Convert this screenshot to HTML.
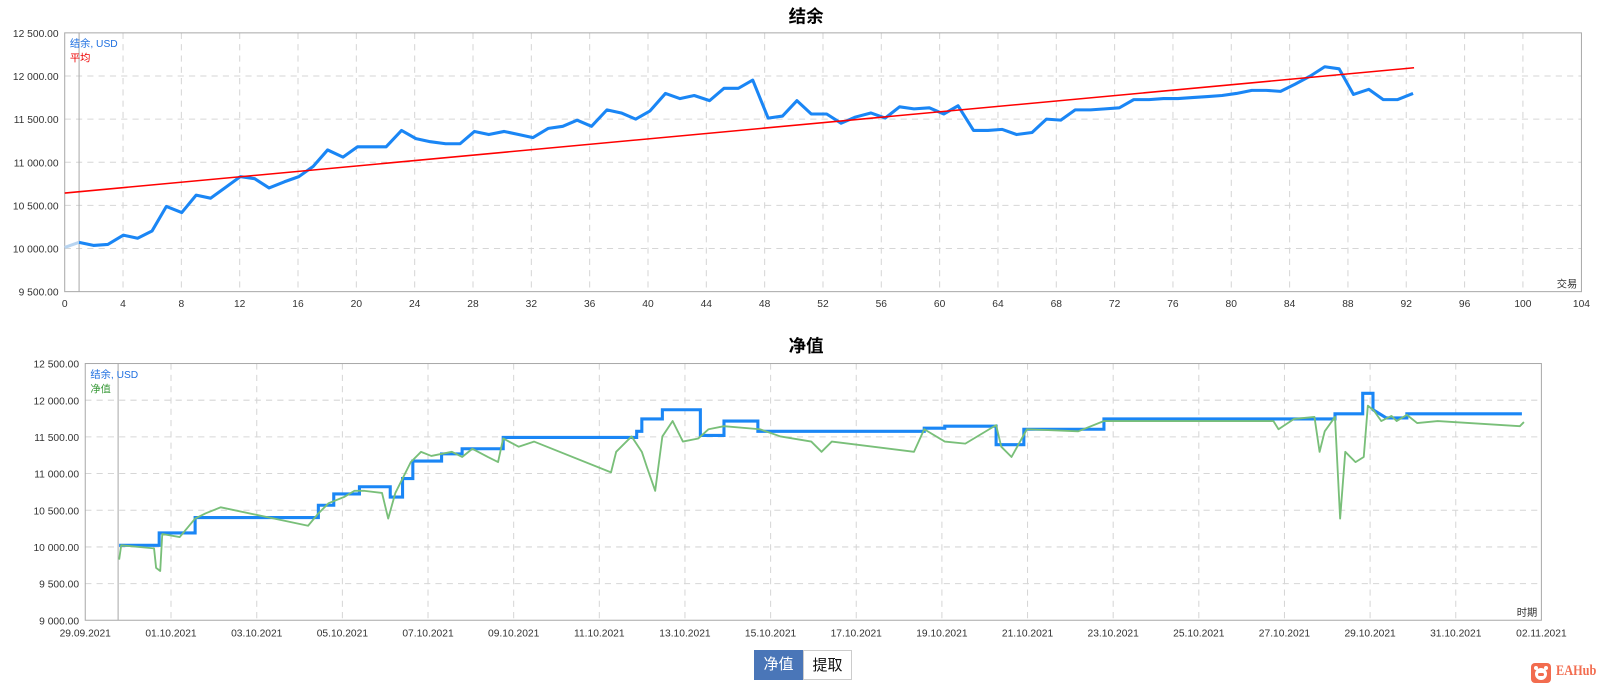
<!DOCTYPE html>
<html><head><meta charset="utf-8"><style>
html,body{margin:0;padding:0;background:#fff;width:1602px;height:687px;overflow:hidden;position:relative;font-family:"Liberation Sans","Noto Sans CJK SC",sans-serif}
svg{position:absolute;left:0;top:0}
.btn{position:absolute;top:650px;height:30px;line-height:30px;width:49px;text-align:center;font-size:15px;box-sizing:border-box}
</style></head><body>
<svg width="1602" height="687" viewBox="0 0 1560 669" font-family="Liberation Sans, Noto Sans CJK SC, sans-serif">
<text x="785" y="22" font-size="17" font-weight="bold" text-anchor="middle" fill="#000">结余</text>
<g stroke="#d6d6d6" stroke-dasharray="6,5" stroke-width="1">
<line x1="63" y1="74" x2="1540" y2="74"/><line x1="63" y1="116" x2="1540" y2="116"/><line x1="63" y1="158" x2="1540" y2="158"/><line x1="63" y1="200" x2="1540" y2="200"/><line x1="63" y1="242" x2="1540" y2="242"/>
<line x1="119.8" y1="32" x2="119.8" y2="284"/><line x1="176.6" y1="32" x2="176.6" y2="284"/><line x1="233.4" y1="32" x2="233.4" y2="284"/><line x1="290.2" y1="32" x2="290.2" y2="284"/><line x1="347" y1="32" x2="347" y2="284"/><line x1="403.8" y1="32" x2="403.8" y2="284"/><line x1="460.6" y1="32" x2="460.6" y2="284"/><line x1="517.4" y1="32" x2="517.4" y2="284"/><line x1="574.2" y1="32" x2="574.2" y2="284"/><line x1="631" y1="32" x2="631" y2="284"/><line x1="687.8" y1="32" x2="687.8" y2="284"/><line x1="744.6" y1="32" x2="744.6" y2="284"/><line x1="801.4" y1="32" x2="801.4" y2="284"/><line x1="858.2" y1="32" x2="858.2" y2="284"/><line x1="915" y1="32" x2="915" y2="284"/><line x1="971.8" y1="32" x2="971.8" y2="284"/><line x1="1028.6" y1="32" x2="1028.6" y2="284"/><line x1="1085.4" y1="32" x2="1085.4" y2="284"/><line x1="1142.2" y1="32" x2="1142.2" y2="284"/><line x1="1199" y1="32" x2="1199" y2="284"/><line x1="1255.8" y1="32" x2="1255.8" y2="284"/><line x1="1312.6" y1="32" x2="1312.6" y2="284"/><line x1="1369.4" y1="32" x2="1369.4" y2="284"/><line x1="1426.2" y1="32" x2="1426.2" y2="284"/><line x1="1483" y1="32" x2="1483" y2="284"/>
</g>
<rect x="63" y="32" width="1477" height="252" fill="none" stroke="#aaa"/>
<line x1="77" y1="32" x2="77" y2="284" stroke="#aaa"/>
<g font-size="10" fill="#333" text-anchor="end">
<text x="57" y="36">12 500.00</text><text x="57" y="78">12 000.00</text><text x="57" y="120">11 500.00</text><text x="57" y="162">11 000.00</text><text x="57" y="204">10 500.00</text><text x="57" y="246">10 000.00</text><text x="57" y="288">9 500.00</text>
</g>
<g font-size="10" fill="#333" text-anchor="middle">
<text x="63" y="299">0</text><text x="119.8" y="299">4</text><text x="176.6" y="299">8</text><text x="233.4" y="299">12</text><text x="290.2" y="299">16</text><text x="347" y="299">20</text><text x="403.8" y="299">24</text><text x="460.6" y="299">28</text><text x="517.4" y="299">32</text><text x="574.2" y="299">36</text><text x="631" y="299">40</text><text x="687.8" y="299">44</text><text x="744.6" y="299">48</text><text x="801.4" y="299">52</text><text x="858.2" y="299">56</text><text x="915" y="299">60</text><text x="971.8" y="299">64</text><text x="1028.6" y="299">68</text><text x="1085.4" y="299">72</text><text x="1142.2" y="299">76</text><text x="1199" y="299">80</text><text x="1255.8" y="299">84</text><text x="1312.6" y="299">88</text><text x="1369.4" y="299">92</text><text x="1426.2" y="299">96</text><text x="1483" y="299">100</text><text x="1540" y="299">104</text>
</g>
<text x="1536" y="280" font-size="10" text-anchor="end" fill="#333">交易</text>
<text x="68" y="46" font-size="10" fill="#1e6fe0">结余, USD</text>
<text x="68" y="60" font-size="10" fill="#e00">平均</text>
<line x1="63" y1="241" x2="77" y2="236" stroke="#b8d4f0" stroke-width="3"/>
<polyline fill="none" stroke="#1a86f5" stroke-width="3" stroke-linejoin="round" points="77,236 91,239 105,238 120,229 134,232 148,225 162,201 177,207 191,190 205,193 219,183 234,172 248,174 262,183 277,177 291,172 305,162 319,146 334,153 348,143 362,143 376,143 391,127 405,135 419,138 434,140 448,140 462,128 476,131 491,128 505,131 519,134 534,125 548,123 562,117 576,123 591,107 605,110 619,116 633,108 648,91 662,96 676,93 691,98 705,86 719,86 733,78 748,115 762,113 776,98 790,111 805,111 819,120 833,114 848,110 862,115 876,104 890,106 905,105 919,111 933,103 948,127 962,127 976,126 990,131 1005,129 1019,116 1033,117 1047,107 1062,107 1076,106 1090,105 1104,97 1119,97 1133,96 1147,96 1161,95 1176,94 1190,93 1204,91 1219,88 1233,88 1247,89 1261,82 1276,74 1290,65 1304,67 1318,92 1333,87 1347,97 1361,97 1376,91"/>
<line x1="63" y1="188" x2="1377" y2="66" stroke="#f00" stroke-width="1.5"/>

<text x="785" y="343" font-size="17" font-weight="bold" text-anchor="middle" fill="#000">净值</text>
<g stroke="#d6d6d6" stroke-dasharray="6,5" stroke-width="1">
<line x1="83" y1="389.7" x2="1501" y2="389.7"/><line x1="83" y1="425.4" x2="1501" y2="425.4"/><line x1="83" y1="461.1" x2="1501" y2="461.1"/><line x1="83" y1="496.9" x2="1501" y2="496.9"/><line x1="83" y1="532.6" x2="1501" y2="532.6"/><line x1="83" y1="568.3" x2="1501" y2="568.3"/>
<line x1="166.5" y1="354" x2="166.5" y2="604"/><line x1="250" y1="354" x2="250" y2="604"/><line x1="333.4" y1="354" x2="333.4" y2="604"/><line x1="416.8" y1="354" x2="416.8" y2="604"/><line x1="500.2" y1="354" x2="500.2" y2="604"/><line x1="583.6" y1="354" x2="583.6" y2="604"/><line x1="667" y1="354" x2="667" y2="604"/><line x1="750.4" y1="354" x2="750.4" y2="604"/><line x1="833.8" y1="354" x2="833.8" y2="604"/><line x1="917.2" y1="354" x2="917.2" y2="604"/><line x1="1000.6" y1="354" x2="1000.6" y2="604"/><line x1="1084" y1="354" x2="1084" y2="604"/><line x1="1167.4" y1="354" x2="1167.4" y2="604"/><line x1="1250.8" y1="354" x2="1250.8" y2="604"/><line x1="1334.2" y1="354" x2="1334.2" y2="604"/><line x1="1417.6" y1="354" x2="1417.6" y2="604"/>
</g>
<rect x="83" y="354" width="1418" height="250" fill="none" stroke="#aaa"/>
<line x1="115" y1="354" x2="115" y2="604" stroke="#aaa"/>
<g font-size="10" fill="#333" text-anchor="end">
<text x="77" y="358">12 500.00</text><text x="77" y="393.7">12 000.00</text><text x="77" y="429.4">11 500.00</text><text x="77" y="465.1">11 000.00</text><text x="77" y="500.9">10 500.00</text><text x="77" y="536.6">10 000.00</text><text x="77" y="572.3">9 500.00</text><text x="77" y="608">9 000.00</text>
</g>
<g font-size="10" fill="#333" text-anchor="middle">
<text x="83" y="620">29.09.2021</text><text x="166.5" y="620">01.10.2021</text><text x="250" y="620">03.10.2021</text><text x="333.4" y="620">05.10.2021</text><text x="416.8" y="620">07.10.2021</text><text x="500.2" y="620">09.10.2021</text><text x="583.6" y="620">11.10.2021</text><text x="667" y="620">13.10.2021</text><text x="750.4" y="620">15.10.2021</text><text x="833.8" y="620">17.10.2021</text><text x="917.2" y="620">19.10.2021</text><text x="1000.6" y="620">21.10.2021</text><text x="1084" y="620">23.10.2021</text><text x="1167.4" y="620">25.10.2021</text><text x="1250.8" y="620">27.10.2021</text><text x="1334.2" y="620">29.10.2021</text><text x="1417.6" y="620">31.10.2021</text><text x="1501" y="620">02.11.2021</text>
</g>
<text x="1497" y="600" font-size="10" text-anchor="end" fill="#333">时期</text>
<text x="88" y="368" font-size="10" fill="#1e6fe0">结余, USD</text>
<text x="88" y="382" font-size="10" fill="#3a9a3a">净值</text>
<polyline fill="none" stroke="#1a86f5" stroke-width="3" points="116,531 155,531 155,519 190,519 190,504 310,504 310,492 325,492 325,481 350,481 350,474 380,474 380,484 392,484 392,466 402,466 402,449 430,449 430,442 450,442 450,437 490,437 490,426 620,426 620,420 625,420 625,408 645,408 645,399 682,399 682,424 705,424 705,410 738,410 738,420 900,420 900,417 920,417 920,415 970,415 970,433 997,433 997,418 1075,418 1075,408 1300,408 1300,403 1327,403 1327,383 1337,383 1337,399 1350,407 1370,407 1370,403 1482,403"/>
<polyline fill="none" stroke="#79bf79" stroke-width="1.8" stroke-linejoin="round" points="116,545 118,531 150,534 152,553 156,556 158,520 175,523 190,505 200,500 215,494 300,512 310,500 320,490 335,484 345,478 355,478 372,480 378,505 385,480 400,450 410,440 420,444 440,440 450,445 460,437 475,445 485,450 490,427 505,435 520,430 595,460 600,440 615,425 625,440 630,455 638,478 645,425 655,410 665,430 680,427 690,418 705,415 740,418 760,425 790,430 800,440 810,430 890,440 900,418 920,430 940,432 970,414 975,435 985,445 1000,418 1050,420 1075,410 1240,410 1245,418 1260,408 1280,406 1285,440 1290,420 1300,406 1305,505 1310,440 1320,450 1328,445 1332,395 1338,400 1345,410 1355,405 1360,410 1370,404 1380,412 1400,410 1480,415 1484,411"/>
</svg>
<div class="btn" style="left:754px;background:#4a76b8;color:#fff">净值</div>
<div class="btn" style="left:803px;border:1px solid #ccc;color:#111">提取</div>
<svg width="20" height="20" viewBox="0 0 20 20" style="left:1531px;top:663px">
<rect width="20" height="20" rx="4" fill="#f26c4f"/>
<circle cx="10" cy="11" r="6" fill="#fff"/>
<circle cx="5" cy="5" r="2" fill="#fff"/><circle cx="15" cy="5" r="2" fill="#fff"/>
<rect x="7" y="10" width="6" height="3" rx="1.5" fill="#f26c4f"/>
</svg>
<div style="position:absolute;left:1556px;top:663px;font-size:15px;font-weight:bold;color:#f26c4f;font-family:'Liberation Serif',serif;transform:scaleX(0.82);transform-origin:0 0;white-space:nowrap">EAHub</div>
</body></html>
